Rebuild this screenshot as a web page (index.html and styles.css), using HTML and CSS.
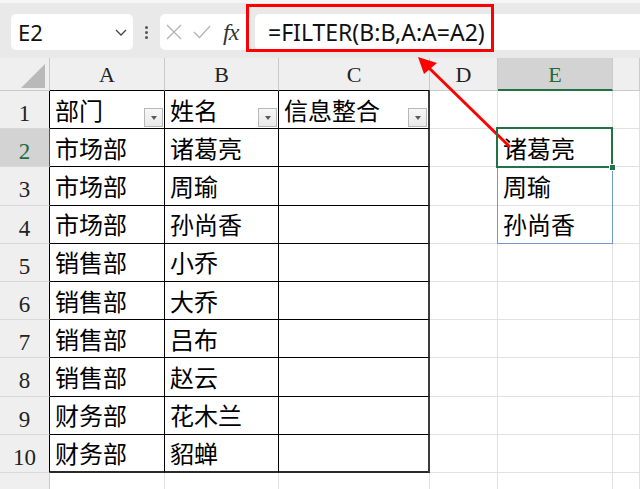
FILE: index.html
```html
<!DOCTYPE html>
<html lang="zh-CN">
<head>
<meta charset="utf-8">
<title>FILTER</title>
<link rel="stylesheet" href="styles.css">
</head>
<body>
<div class="app">
  <div class="toolbar">
    <div class="namebox">
      <span class="ref">E2</span>
      <svg class="chev" width="12" height="7" viewBox="0 0 12 7"><path d="M1 1 L6 6 L11 1" fill="none" stroke="#444" stroke-width="1.3"/></svg>
    </div>
    <div class="dots"><i></i><i></i><i></i></div>
    <div class="fxbox">
      <svg class="ico-x" width="16" height="16" viewBox="0 0 16 16"><path d="M1 1 L15 15 M15 1 L1 15" stroke="#b4b4b4" stroke-width="1.3" fill="none"/></svg>
      <svg class="ico-ok" width="18" height="14" viewBox="0 0 18 14"><path d="M1 7 L6.5 12.5 L17 1" stroke="#b4b4b4" stroke-width="1.3" fill="none"/></svg>
      <span class="fx">fx</span>
    </div>
    <div class="formula">=FILTER(B:B,A:A=A2)</div>
  </div>

  <div class="sheet">
    <div class="corner"><svg width="24" height="24" viewBox="0 0 24 24"><polygon points="24,0 24,24 0,24" fill="#b9b9b9"/></svg></div>
    <div class="ch tb">A</div>
    <div class="ch tb">B</div>
    <div class="ch tb">C</div>
    <div class="ch">D</div>
    <div class="ch sel">E</div>
    <div class="ch"></div>

    <div class="rh tb">1</div>
    <div class="c t hd"><span>部门</span><span class="fbtn"><i></i></span></div>
    <div class="c t hd"><span>姓名</span><span class="fbtn"><i></i></span></div>
    <div class="c t hd cr"><span>信息整合</span><span class="fbtn"><i></i></span></div>
    <div class="c"></div>
    <div class="c"></div>
    <div class="c"></div>

    <div class="rh tb sel">2</div>
    <div class="c t">市场部</div>
    <div class="c t">诸葛亮</div>
    <div class="c t cr"></div>
    <div class="c"></div>
    <div class="c e2">诸葛亮<div class="spill"></div><div class="active"><span class="handle"></span></div></div>
    <div class="c"></div>

    <div class="rh tb">3</div>
    <div class="c t">市场部</div>
    <div class="c t">周瑜</div>
    <div class="c t cr"></div>
    <div class="c"></div>
    <div class="c">周瑜</div>
    <div class="c"></div>

    <div class="rh tb">4</div>
    <div class="c t">市场部</div>
    <div class="c t">孙尚香</div>
    <div class="c t cr"></div>
    <div class="c"></div>
    <div class="c">孙尚香</div>
    <div class="c"></div>

    <div class="rh tb">5</div>
    <div class="c t">销售部</div>
    <div class="c t">小乔</div>
    <div class="c t cr"></div>
    <div class="c"></div>
    <div class="c"></div>
    <div class="c"></div>

    <div class="rh tb">6</div>
    <div class="c t">销售部</div>
    <div class="c t">大乔</div>
    <div class="c t cr"></div>
    <div class="c"></div>
    <div class="c"></div>
    <div class="c"></div>

    <div class="rh tb">7</div>
    <div class="c t">销售部</div>
    <div class="c t">吕布</div>
    <div class="c t cr"></div>
    <div class="c"></div>
    <div class="c"></div>
    <div class="c"></div>

    <div class="rh tb">8</div>
    <div class="c t">销售部</div>
    <div class="c t">赵云</div>
    <div class="c t cr"></div>
    <div class="c"></div>
    <div class="c"></div>
    <div class="c"></div>

    <div class="rh tb">9</div>
    <div class="c t">财务部</div>
    <div class="c t">花木兰</div>
    <div class="c t cr"></div>
    <div class="c"></div>
    <div class="c"></div>
    <div class="c"></div>

    <div class="rh tb">10</div>
    <div class="c t rb">财务部</div>
    <div class="c t rb">貂蝉</div>
    <div class="c t rb cr"></div>
    <div class="c"></div>
    <div class="c"></div>
    <div class="c"></div>

    <div class="rh last">11</div>
    <div class="c"></div>
    <div class="c"></div>
    <div class="c"></div>
    <div class="c"></div>
    <div class="c"></div>
    <div class="c"></div>
  </div>

  <div class="callout"></div>
  <svg class="arrow" width="640" height="489" viewBox="0 0 640 489">
    <line x1="510" y1="147" x2="427" y2="66" stroke="#ff0000" stroke-width="3"/>
    <polygon points="418,57 437,63 424,74" fill="#ff0000"/>
  </svg>
</div>
</body>
</html>
```

FILE: styles.css
```css
* { box-sizing: border-box; margin: 0; padding: 0; }
html, body { width: 640px; height: 489px; overflow: hidden; background: #fff; }
body { font-family: "Noto Sans", "Noto Sans CJK SC", sans-serif; }

.app { position: relative; width: 640px; height: 489px; overflow: hidden; }

/* ---------- formula toolbar ---------- */
.toolbar {
  height: 58px;
  background: #e9e9e9;
  border-top: 3px solid #f6f6f6;
  display: flex;
  align-items: flex-start;
  padding: 11px 0 0 11px;
}
.namebox {
  width: 122px; height: 36px;
  background: #fff;
  border-radius: 5px;
  display: flex; align-items: center; justify-content: space-between;
  padding: 0 6px 0 7px;
}
.ref { font-size: 22px; color: #111; line-height: 1; }
.dots {
  width: 27px; height: 36px;
  display: flex; flex-direction: column; align-items: center; justify-content: center;
  gap: 2px;
}
.dots i { display: block; width: 3px; height: 3px; border-radius: 50%; background: #555; }
.fxbox {
  width: 90px; height: 36px;
  background: #fff;
  border-radius: 5px;
  display: flex; align-items: center;
  padding-left: 6px;
}
.ico-x { margin-right: 11px; }
.ico-ok { margin-right: 12px; }
.fx {
  font-family: "Liberation Serif", serif;
  font-style: italic;
  font-size: 24px;
  line-height: 1;
  color: #333;
  letter-spacing: -1px;
}
.formula {
  flex: 1;
  margin-left: 5px;
  height: 36px;
  background: #fff;
  border-radius: 5px 0 0 5px;
  padding-left: 13px;
  font-size: 23px;
  line-height: 36px;
  color: #111;
  white-space: nowrap;
}
.callout {
  position: absolute;
  left: 246px; top: 4px;
  width: 248px; height: 48px;
  border: 3px solid #ff0000;
}
.arrow { position: absolute; left: 0; top: 0; pointer-events: none; }

/* ---------- sheet grid ---------- */
.sheet {
  display: grid;
  grid-template-columns: 50px 115px 114px 151px 68px 115px 1fr;
  grid-template-rows: 33px repeat(10, 38.2px) 40px;
}
.corner {
  background: #efefef;
  border-right: 1px solid #c9c9c9;
  border-bottom: 1px solid #c9c9c9;
  display: flex; justify-content: flex-end; align-items: flex-end;
  padding: 0 4px 2px 0;
}
.ch {
  background: #efefef;
  border-right: 1px solid #cacaca;
  border-bottom: 1px solid #cacaca;
  display: flex; justify-content: center; align-items: center;
  padding-top: 2px;
  font-family: "Liberation Serif", serif;
  font-size: 22px;
  color: #222;
}
.ch.tb { border-bottom-color: #000; }
.ch.sel { background: #d3d3d3; color: #1e6b3f; border-bottom: 2px solid #217346; }

.rh {
  background: #efefef;
  border-right: 1px solid #cacaca;
  border-bottom: 1px solid #d8d8d8;
  display: flex; justify-content: center; align-items: center;
  padding-top: 8px;
  font-family: "Liberation Serif", serif;
  font-size: 23px;
  line-height: 1;
  color: #222;
}
.rh.tb { border-right-color: #000; }
.rh.sel { background: #d3d3d3; color: #1e6b3f; border-right-color: #217346; }
.rh.last { align-items: flex-start; padding-top: 12px; }

.c {
  border-right: 1px solid #e1e1e1;
  border-bottom: 1px solid #e1e1e1;
  display: flex; align-items: center;
  padding-left: 5px;
  font-family: "Noto Sans CJK SC", "Noto Sans", sans-serif;
  font-size: 24px;
  line-height: 1;
  color: #000;
  white-space: nowrap;
}
.t { border-right-color: #000; border-bottom-color: #000; }
.t.cr { border-right: 2px solid #3c3c3c; }
.t.rb { border-bottom: 2px solid #2a2a2a; }
.hd { justify-content: space-between; padding-right: 1px; }
.hd span:first-child { align-self: center; }

.fbtn {
  align-self: flex-end;
  margin-bottom: 1px;
  width: 19px; height: 19px;
  border: 1px solid #b8b8b8;
  background: linear-gradient(#f7f7f7, #e9e9e9);
  display: flex; align-items: center; justify-content: center;
}
.fbtn i {
  display: block; width: 0; height: 0;
  border-left: 3.5px solid transparent;
  border-right: 3.5px solid transparent;
  border-top: 4px solid #5a5a5a;
  margin-top: 1px;
}

/* active cell + spill range */
.e2 { position: relative; }
.spill {
  position: absolute;
  left: -1px; top: -1px;
  width: 116px; height: 116px;
  border: 1px solid #7397d9;
  z-index: 2;
}
.active {
  position: absolute;
  left: -2px; top: -2px;
  width: 117px; height: 41px;
  border: 2px solid #217346;
  z-index: 3;
}
.handle {
  position: absolute;
  right: -5px; bottom: -5px;
  width: 7px; height: 7px;
  background: #217346;
  border: 1px solid #fff;
}
```
